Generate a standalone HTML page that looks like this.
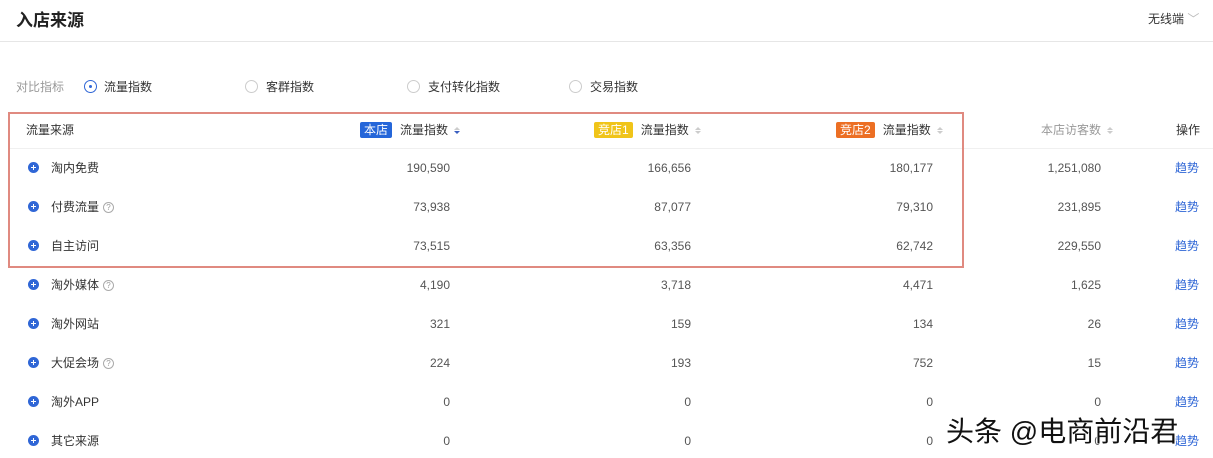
<!DOCTYPE html>
<html><head><meta charset="utf-8"><style>
body{margin:0;width:1213px;height:458px;background:#fff;font-family:"Liberation Sans","Noto Sans CJK SC",sans-serif;position:relative;overflow:hidden;color:#333}
.a{position:absolute;white-space:nowrap}
.t{font-size:12px;color:#333}
.n{font-size:12px;color:#555;text-align:right}
.plus{position:absolute;width:11px;height:11px;border-radius:50%;background:#2f66d6}
.plus:before{content:"";position:absolute;left:3px;top:5px;width:5px;height:1px;background:#fff}
.plus:after{content:"";position:absolute;left:5px;top:3px;width:1px;height:5px;background:#fff}
.q{display:inline-block;width:9px;height:9px;border:1px solid #aaa;border-radius:50%;font-size:8px;line-height:9px;text-align:center;color:#999;margin-left:4px;vertical-align:1px}
.radio{position:absolute;width:11px;height:11px;border:1px solid #ccc;border-radius:50%}
.tag{display:inline-block;color:#fff;font-size:12px;padding:0 4px;border-radius:2px;line-height:16px;margin-right:8px}
.sort{display:inline-block;width:6px;margin-left:6px;vertical-align:middle;font-size:0}
.sort i{display:block;width:0;height:0;border-left:3px solid transparent;border-right:3px solid transparent}
.lk{font-size:12px;color:#2f66d6}
</style></head><body>
<div class="a" style="left:16px;top:6px;font-size:17px;font-weight:bold;color:#222">入店来源</div>
<div class="a t" style="left:1148px;top:10px">无线端 <span style="color:#bbb">﹀</span></div>
<div class="a" style="left:0;top:41px;width:1213px;height:1px;background:#e6e6e6"></div>
<div class="a t" style="left:16px;top:78px;color:#999">对比指标</div>
<div class="radio" style="left:84px;top:80px;border-color:#2f66d6"><div style="position:absolute;left:4px;top:4px;width:3px;height:3px;background:#2f66d6;border-radius:50%"></div></div>
<div class="a t" style="left:104px;top:78px">流量指数</div>
<div class="radio" style="left:245px;top:80px"></div><div class="a t" style="left:266px;top:78px">客群指数</div>
<div class="radio" style="left:407px;top:80px"></div><div class="a t" style="left:428px;top:78px">支付转化指数</div>
<div class="radio" style="left:569px;top:80px"></div><div class="a t" style="left:590px;top:78px">交易指数</div>

<div class="a t" style="left:26px;top:121px">流量来源</div>
<div class="a t" style="left:360px;top:121px"><span class="tag" style="background:#2566d9">本店</span>流量指数<span class="sort"><i style="border-bottom:3px solid #ccc;margin-bottom:1px"></i><i style="border-top:3px solid #3a5fc0"></i></span></div>
<div class="a t" style="left:594px;top:121px"><span class="tag" style="background:#f0c419">竞店1</span>流量指数<span class="sort"><i style="border-bottom:3px solid #ccc;margin-bottom:1px"></i><i style="border-top:3px solid #ccc"></i></span></div>
<div class="a t" style="left:836px;top:121px"><span class="tag" style="background:#ec6f24">竞店2</span>流量指数<span class="sort"><i style="border-bottom:3px solid #ccc;margin-bottom:1px"></i><i style="border-top:3px solid #ccc"></i></span></div>
<div class="a t" style="left:1041px;top:121px;color:#999">本店访客数<span class="sort"><i style="border-bottom:3px solid #ccc;margin-bottom:1px"></i><i style="border-top:3px solid #ccc"></i></span></div>
<div class="a t" style="left:1176px;top:121px">操作</div>
<div class="a" style="left:10px;top:148px;width:1203px;height:1px;background:#f0f0f0"></div>

<div id="rows"></div>
<div class="a" style="left:8px;top:112px;width:952px;height:152px;border:2px solid #e08a80"></div>
<div class="a" style="left:946px;top:410px;font-size:28px;color:#111;text-shadow:1px 1px 0 #fff,-1px -1px 0 #fff">头条 @电商前沿君</div>
<script>
var d=[["淘内免费",0,"190,590","166,656","180,177","1,251,080"],["付费流量",1,"73,938","87,077","79,310","231,895"],["自主访问",0,"73,515","63,356","62,742","229,550"],["淘外媒体",1,"4,190","3,718","4,471","1,625"],["淘外网站",0,"321","159","134","26"],["大促会场",1,"224","193","752","15"],["淘外APP",0,"0","0","0","0"],["其它来源",0,"0","0","0","0"]];
var h="";d.forEach(function(r,i){var y=159+i*39;
h+='<div class="plus" style="left:28px;top:'+(y+3)+'px"></div><div class="a t" style="left:51px;top:'+y+'px">'+r[0]+(r[1]?'<span class="q">?</span>':'')+'</div>';
[[450,2],[691,3],[933,4],[1101,5]].forEach(function(c){h+='<div class="a n" style="left:'+(c[0]-100)+'px;width:100px;top:'+(y+2)+'px">'+r[c[1]]+'</div>'});
h+='<div class="a lk" style="left:1175px;top:'+y+'px">趋势</div>';});
document.getElementById("rows").innerHTML=h;
</script>
</body></html>
